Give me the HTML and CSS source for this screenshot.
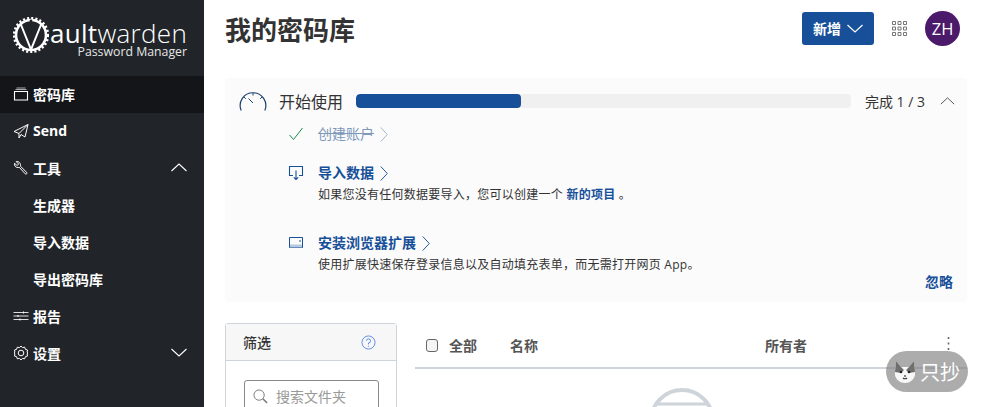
FILE: index.html
```html
<!DOCTYPE html>
<html lang="zh-CN">
  <head>
    <meta charset="UTF-8" />
    <title>我的密码库</title>
    <link rel="stylesheet" href="styles.css">
  </head>
  <body>
    <div id="app">
      <nav class="sidebar">
        <div class="logo">
          <svg class="logo-mark" viewBox="0 0 36 36" width="36" height="36">
            <circle cx="18" cy="18" r="15" fill="none" stroke="#fff" stroke-width="2.600"/>
            <circle cx="18" cy="18" r="17" fill="none" stroke="#fff" stroke-width="2.400" stroke-dasharray="2.100 2.100"/>
            <path d="M7.500 6.500 18 32.500 28.500 6.500" fill="none" stroke="#fff" stroke-width="2"/>
            <circle cx="18" cy="4" r="1.400" fill="#212529"/>
          </svg>
          <div class="logo-text">
            <div class="logo-name"><b>ault</b>warden</div>
            <div class="logo-sub">Password Manager</div>
          </div>
        </div>
        <a class="nav-item active">
          <svg class="nav-icon" viewBox="0 0 16 16"><path d="M1.500 5.500h13v8.500h-13z" fill="none" stroke="#fff" stroke-width="1.100"/><path d="M2.500 3.500h11M3.500 2h9" fill="none" stroke="#aaa" stroke-width="1.100"/></svg>
          <span>密码库</span>
        </a>
        <a class="nav-item">
          <svg class="nav-icon" viewBox="0 0 16 16"><path d="M1 8.500 15 1.500 12 14 8 11.500 6 15V10.500L15 1.500M1 8.500 6 10.500" fill="none" stroke="#fff" stroke-width="1" stroke-linejoin="round"/></svg>
          <span>Send</span>
        </a>
        <a class="nav-item">
          <svg class="nav-icon" viewBox="0 0 16 16"><path d="M3.200 1.600 5.600 4 4 5.600 1.600 3.200C1 5.500 2.500 7.800 5.200 7.500L6.300 7.300 12.200 13.800C13 14.600 14.600 13.400 13.800 12.500L7.500 6.300C8 3.500 6 1 3.200 1.600Z" fill="none" stroke="#fff" stroke-width="1"/></svg>
          <span>工具</span>
          <svg class="nav-caret" viewBox="0 0 16 9"><path d="M.5 8 8 1l7.500 7" fill="none" stroke="#fff" stroke-width="1.100"/></svg>
        </a>
        <a class="nav-item sub"><span>生成器</span></a>
        <a class="nav-item sub"><span>导入数据</span></a>
        <a class="nav-item sub"><span>导出密码库</span></a>
        <a class="nav-item">
          <svg class="nav-icon" viewBox="0 0 16 16"><path d="M.5 4.500h15M.5 8h15M.5 11.500h15" fill="none" stroke="#ddd" stroke-width="1"/><path d="M10.500 3.500v2M5 7v2M7 10.500v2" fill="none" stroke="#fff" stroke-width="1"/></svg>
          <span>报告</span>
        </a>
        <a class="nav-item">
          <svg class="nav-icon" viewBox="0 0 16 16"><path d="M8 1l1.500 1.600 2.200-.4.700 2.100 2.100.7-.4 2.200L15 8l-.9.800.4 2.200-2.100.7-.7 2.100-2.200-.4L8 15l-1.500-1.600-2.200.4-.7-2.100-2.100-.7.4-2.200L1 8l.9-.8-.4-2.200 2.100-.7.7-2.100 2.200.4z" fill="none" stroke="#fff" stroke-width="1"/><circle cx="8" cy="8" r="2.800" fill="none" stroke="#fff" stroke-width="1"/></svg>
          <span>设置</span>
          <svg class="nav-caret" viewBox="0 0 16 9"><path d="M.5 1 8 8l7.500-7" fill="none" stroke="#fff" stroke-width="1.100"/></svg>
        </a>
      </nav>

      <main class="main">
        <header class="topbar">
          <h1>我的密码库</h1>
          <button class="btn-new">新增
            <svg viewBox="0 0 16 9" width="16" height="9"><path d="M.5 1 8 8l7.500-7" fill="none" stroke="#fff" stroke-width="1.200"/></svg>
          </button>
          <svg class="apps" viewBox="0 0 15 15" width="15" height="15">
            <path d="M.5.500h3v3h-3zM6 .500h3v3H6zM11.500.500h3v3h-3zM.5 6h3v3h-3zM6 6h3v3H6zM11.500 6h3v3h-3zM.5 11.500h3v3h-3zM6 11.500h3v3H6zM11.500 11.500h3v3h-3z" fill="none" stroke="#777" stroke-width="1"/>
          </svg>
          <div class="avatar">ZH</div>
        </header>

        <section class="setup">
          <div class="setup-head">
            <svg class="gauge" viewBox="0 0 28 20" width="28" height="20">
              <path d="M2.200 19.500A12.800 12.800 0 1 1 25.800 19.500" fill="none" stroke="#1c3f6e" stroke-width="1.200"/>
              <path d="M14 2v2.500M5 6l1.800 1.800M23 6l-1.800 1.800M9.500 7.500 14 12" fill="none" stroke="#1c3f6e" stroke-width="1"/>
            </svg>
            <span class="setup-title">开始使用</span>
            <div class="progress"><div class="progress-bar" style="width:33.33%"></div></div>
            <span class="setup-count">完成 1 / 3</span>
            <svg class="setup-caret" viewBox="0 0 16 9" width="15" height="8"><path d="M.5 8 8 1l7.500 7" fill="none" stroke="#444" stroke-width="1"/></svg>
          </div>

          <div class="task done">
            <svg class="task-icon" viewBox="0 0 16 16" width="16" height="16"><path d="M1.500 9 5.500 13.500 14.500 2" fill="none" stroke="#1b8a4f" stroke-width="1"/></svg>
            <div class="task-body">
              <div class="task-title"><s>创建账户</s><svg class="chev" viewBox="0 0 8 16" width="8" height="15"><path d="M.5.500 7.500 8 .5 15.500" fill="none" stroke="#9fb1c9" stroke-width="1"/></svg></div>
            </div>
          </div>
          <div class="task">
            <svg class="task-icon" viewBox="0 0 16 16" width="16" height="16"><path d="M5 10.500H1.500v-9h13v9H11M8 5.500v9M5.800 12.300 8 14.500l2.200-2.200" fill="none" stroke="#175099" stroke-width="1.100"/></svg>
            <div class="task-body">
              <div class="task-title">导入数据<svg class="chev" viewBox="0 0 8 16" width="8" height="15"><path d="M.5.500 7.500 8 .5 15.500" fill="none" stroke="#175099" stroke-width="1"/></svg></div>
              <p>如果您没有任何数据要导入，您可以创建一个 <a>新的项目</a> 。</p>
            </div>
          </div>
          <div class="task last">
            <svg class="task-icon" viewBox="0 0 16 16" width="16" height="16"><path d="M1.500 2.500h13v10h-13z" fill="none" stroke="#175099" stroke-width="1"/><path d="M2 9.500h12v3H2z" fill="#b6c8e2"/><path d="M11 6h2" stroke="#175099"/></svg>
            <div class="task-body">
              <div class="task-title">安装浏览器扩展<svg class="chev" viewBox="0 0 8 16" width="8" height="15"><path d="M.5.500 7.500 8 .5 15.500" fill="none" stroke="#175099" stroke-width="1"/></svg></div>
              <p>使用扩展快速保存登录信息以及自动填充表单，而无需打开网页 App。</p>
            </div>
          </div>
          <a class="dismiss">忽略</a>
        </section>

        <div class="vault">
          <aside class="filters">
            <div class="filters-head">
              <span>筛选</span>
              <svg viewBox="0 0 16 16" width="15" height="15"><circle cx="8" cy="8" r="7" fill="none" stroke="#175ddc" stroke-opacity=".7" stroke-width="1"/><path d="M5.800 6.200A2.200 2.200 0 1 1 8 8.500v1.500M8 11.500v1" fill="none" stroke="#175ddc" stroke-opacity=".7" stroke-width="1"/></svg>
            </div>
            <div class="filters-body">
              <div class="search">
                <svg viewBox="0 0 16 16" width="15" height="15"><circle cx="6.500" cy="6.500" r="5.500" fill="none" stroke="#777" stroke-width="1"/><path d="M10.500 10.500 15 15" stroke="#777" stroke-width="1.600"/></svg>
                <span>搜索文件夹</span>
              </div>
            </div>
          </aside>
          <div class="items">
            <div class="items-head">
              <span class="check"></span>
              <span class="col-all">全部</span>
              <span class="col-name">名称</span>
              <span class="col-owner">所有者</span>
              <svg class="col-more" viewBox="0 0 3 13" width="3" height="13"><path d="M1.500 0v2M1.500 5.500v2M1.500 11v2" stroke="#666" stroke-width="1.600"/></svg>
            </div>
            <div class="empty">
              <svg viewBox="0 0 66 66" width="66" height="66"><circle cx="33" cy="33" r="31" fill="none" stroke="#ced4da" stroke-width="4"/><path d="M6 16h54" stroke="#ced4da" stroke-width="3"/></svg>
            </div>
          </div>
        </div>
      </main>

      <div class="badge">
        <svg viewBox="0 0 24 24" width="24" height="24">
          <path d="M3 1 8 7h8l5-6 1 11c1 6-4 11-10 11S1 18 2 12z" fill="#f7f7f7"/>
          <path d="M3 1 8 7l3 3-3 3-6-1zM21 1l-5 6-3 3 3 3 6-1z" fill="#6f6f6f"/>
          <circle cx="8" cy="12" r="1.300" fill="#222"/>
          <circle cx="16" cy="12" r="1.300" fill="#222"/>
          <path d="M12 15v2M10 18c1 1 3 1 4 0" fill="none" stroke="#333" stroke-width="1.200"/>
        </svg>
        <span>只抄</span>
      </div>
    </div>
  </body>
</html>
```

FILE: styles.css
```css
* {
  box-sizing: border-box;
}

html, body {
  margin: 0;
  height: 100%;
  overflow: hidden;
}

body {
  font-family: "Open Sans", "Noto Sans CJK SC", sans-serif;
  font-size: 14px;
  color: #333;
  background: #fff;
}

#app {
  display: flex;
  height: 100%;
  position: relative;
  overflow: hidden;
}

.sidebar {
  width: 204px;
  flex-shrink: 0;
  background: #212529;
  color: #fff;
}

.logo {
  display: flex;
  align-items: flex-start;
  height: 76px;
  padding: 17px 0 0 13px;
}

.logo-mark {
  flex-shrink: 0;
}

.logo-text {
  margin: 3px 0 0 1px;
  color: #fff;
}

.logo-name {
  font-size: 26px;
  font-weight: 300;
  line-height: 26px;
  letter-spacing: 0.3px;
  white-space: nowrap;
}

.logo-sub {
  font-size: 12.3px;
  line-height: 12px;
  text-align: right;
  white-space: nowrap;
  color: #e6e6e6;
}

.nav-item {
  display: flex;
  align-items: center;
  height: 37px;
  padding: 0 17px 2px 13px;
  font-weight: 700;
  font-size: 14px;
}

.nav-item.active {
  background: #131519;
}

.nav-item.sub {
  padding-left: 33px;
}

.nav-icon {
  width: 16px;
  height: 16px;
  margin-right: 4px;
  flex-shrink: 0;
}

.nav-caret {
  width: 16px;
  height: 9px;
  margin-left: auto;
}

.main {
  flex: 1;
  padding: 0 16px 0 21px;
  min-width: 0;
}

.topbar {
  display: flex;
  align-items: center;
  height: 78px;
  padding-bottom: 22px;
}

.topbar h1 {
  margin: 0 auto 0 0;
  padding-top: 2px;
  font-size: 26px;
  font-weight: 700;
  color: #333;
}

.btn-new {
  display: flex;
  align-items: center;
  gap: 6px;
  width: 72px;
  height: 33px;
  padding: 0 0 0 11px;
  border: 0;
  border-radius: 3px;
  background: #175099;
  color: #fff;
  font: 700 14px "Open Sans", "Noto Sans CJK SC", sans-serif;
}

.apps {
  margin: 0 0 0 18px;
}

.avatar {
  width: 35px;
  height: 35px;
  margin: 0 7px 0 18px;
  border-radius: 50%;
  background: #4c1a6b;
  color: #fff;
  font-size: 16.5px;
  line-height: 35px;
  text-align: center;
}

.setup {
  position: relative;
  height: 224px;
  background: #fbfbfb;
  border-radius: 4px;
  padding: 12px 12px 0 14px;
}

.setup-head {
  display: flex;
  align-items: center;
  height: 21px;
}

.gauge {
  flex-shrink: 0;
}

.setup-title {
  margin-left: 12px;
  font-size: 16px;
  color: #333;
}

.progress {
  flex: 1;
  height: 14px;
  margin-left: 13px;
  background: #f0f0f0;
  border-radius: 4px;
  overflow: hidden;
}

.progress-bar {
  height: 100%;
  background: #175099;
  border-radius: 4px;
}

.setup-count {
  margin-left: 14px;
  font-size: 14px;
  color: #333;
}

.setup-caret {
  margin: 0 0 0 15px;
}

.task {
  display: flex;
  padding-left: 49px;
  margin-top: 13px;
}

.task.done {
  margin-top: 13px;
  height: 26px;
}

.task-icon {
  margin: 2px 14px 0 0;
  flex-shrink: 0;
}

.task-title {
  display: flex;
  align-items: center;
  gap: 6px;
  font-weight: 700;
  font-size: 14px;
  line-height: 20px;
  color: #175099;
}

.task.done .task-title {
  color: #7f99bb;
  font-weight: 400;
}

.task p {
  margin: 4px 0 0;
  font-size: 12px;
  letter-spacing: 0.25px;
  line-height: 16px;
  color: #333;
}

.task p a {
  font-weight: 700;
  color: #175099;
}

.task.last {
  margin-top: 30px;
}

.dismiss {
  position: absolute;
  right: 14px;
  bottom: 11px;
  font-size: 14px;
  font-weight: 700;
  color: #175099;
}

.vault {
  display: flex;
  margin-top: 21px;
  gap: 18px;
}

.filters {
  width: 172px;
  height: 90px;
  flex-shrink: 0;
  border: 1px solid #ced4da;
  border-radius: 3px;
}

.filters-head {
  display: flex;
  align-items: center;
  justify-content: space-between;
  height: 37px;
  padding: 0 20px 0 17px;
  background: #f7f7f7;
  border-bottom: 1px solid #ced4da;
  font-size: 14px;
  font-weight: 500;
}

.filters-body {
  padding: 19px 17px 0 18px;
}

.search {
  display: flex;
  align-items: center;
  gap: 8px;
  height: 34px;
  border: 1px solid #888;
  border-radius: 3px;
  padding: 0 8px 2px;
  color: #999;
  font-size: 14px;
}

.items {
  flex: 1;
  min-width: 0;
}

.items-head {
  display: flex;
  align-items: center;
  height: 46px;
  border-bottom: 2px solid #ced4da;
  font-weight: 700;
  font-size: 14px;
  color: #555;
}

.check {
  width: 12px;
  height: 13px;
  margin-left: 11px;
  border: 1px solid #666;
  border-radius: 3px;
  background: #f4f4f4;
}

.col-all {
  margin-left: 11px;
}

.col-name {
  margin-left: 33px;
}

.col-owner {
  margin-left: 227px;
}

.col-more {
  margin: -4px 17px 0 auto;
}

.empty {
  display: flex;
  justify-content: center;
  margin-top: 19px;
  padding-right: 18px;
}

.badge {
  position: absolute;
  top: 351px;
  left: 886px;
  display: flex;
  align-items: center;
  gap: 3px;
  width: 82px;
  height: 41px;
  padding-left: 7px;
  border-radius: 21px;
  background: rgba(128, 128, 128, 0.65);
  color: #fff;
  font-size: 20px;
}
```
